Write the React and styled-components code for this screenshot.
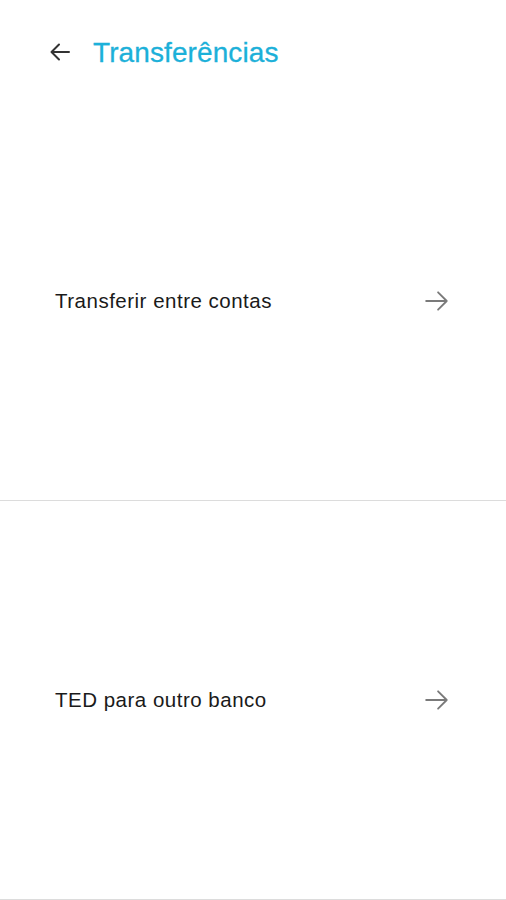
import React from "react";
import styled, { createGlobalStyle } from "styled-components";

const GlobalStyle = createGlobalStyle`
  html, body {
    margin: 0;
    padding: 0;
    background: #ffffff;
  }
  body {
    font-family: "Liberation Sans", Arial, sans-serif;
  }
`;

const Screen = styled.div`
  width: 506px;
  height: 900px;
  background: #ffffff;
  display: flex;
  flex-direction: column;
  overflow: hidden;
`;

const Header = styled.header`
  height: 102px;
  display: flex;
  align-items: flex-start;
  padding: 39px 0 0 47px;
  box-sizing: border-box;
  gap: 20px;
`;

const BackButton = styled.button`
  width: 26px;
  height: 26px;
  padding: 0;
  margin: 0;
  border: none;
  background: transparent;
  display: flex;
  align-items: center;
  justify-content: center;
  cursor: pointer;
`;

const Title = styled.h1`
  margin: 0;
  font-size: 28px;
  font-weight: 400;
  line-height: 28px;
  color: #1cb0d9;
  letter-spacing: 0.1px;
  -webkit-text-stroke: 0.3px #1cb0d9;
`;

const List = styled.div`
  display: flex;
  flex-direction: column;
`;

const Row = styled.div`
  height: 398px;
  border-bottom: 1px solid #dcdcdc;
  display: flex;
  align-items: center;
  justify-content: space-between;
  padding: 0 56px 0 55px;
  cursor: pointer;
`;

const Label = styled.span`
  font-size: 20.5px;
  letter-spacing: 0.5px;
  color: #1a1a1a;
`;

const ArrowBack = () => (
  <svg width="24" height="24" viewBox="0 0 24 24" fill="none">
    <path
      d="M21 12H4M11 4.5L3.5 12L11 19.5"
      stroke="#333333"
      strokeWidth="2"
      strokeLinecap="round"
      strokeLinejoin="round"
    />
  </svg>
);

const ArrowForward = () => (
  <svg width="26" height="26" viewBox="0 0 24 24" fill="none">
    <path
      d="M2 12H21M13 4L21 12L13 20"
      stroke="#7a7a7a"
      strokeWidth="1.7"
      strokeLinecap="round"
      strokeLinejoin="round"
    />
  </svg>
);

const options = ["Transferir entre contas", "TED para outro banco"];

export default function App() {
  return (
    <>
      <GlobalStyle />
      <Screen>
        <Header>
          <BackButton aria-label="Voltar">
            <ArrowBack />
          </BackButton>
          <Title>Transferências</Title>
        </Header>
        <List>
          {options.map((label) => (
            <Row key={label}>
              <Label>{label}</Label>
              <ArrowForward />
            </Row>
          ))}
        </List>
      </Screen>
    </>
  );
}
